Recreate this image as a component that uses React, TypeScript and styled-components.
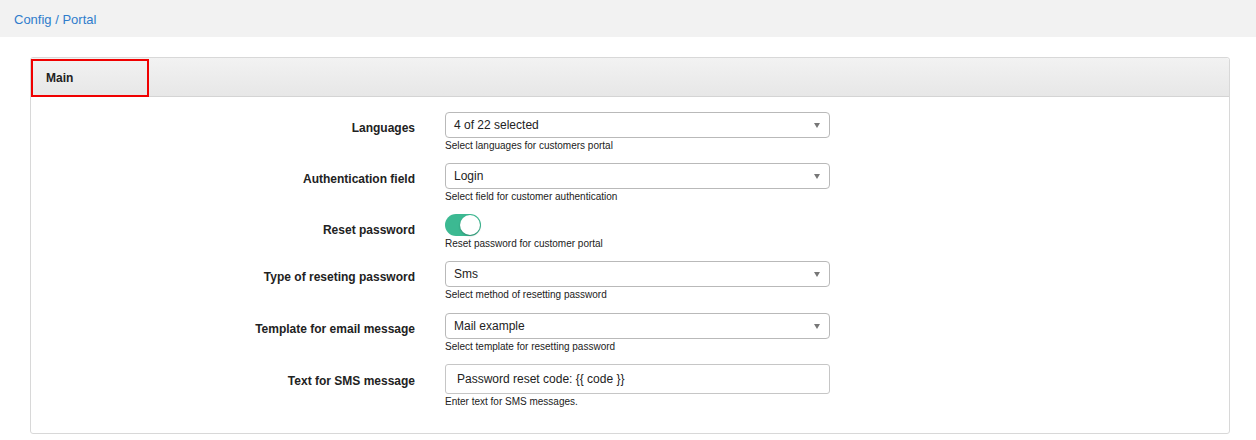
import React from "react";
import styled, { createGlobalStyle } from "styled-components";

const Global = createGlobalStyle`
  html, body { margin: 0; padding: 0; background: #fff; }
  body { font-family: "Liberation Sans", Arial, Helvetica, sans-serif; color: #333; }
`;

const TopBar = styled.div`
  height: 37px;
  background: #f2f2f2;
  display: flex;
  align-items: center;
  padding-left: 14px;
  box-sizing: border-box;
`;

const Crumb = styled.span`
  font-size: 13px;
  color: #2f7ccc;
  padding-top: 1px;
`;

const Page = styled.div`
  padding: 20px 26px 0 30px;
`;

const Panel = styled.div`
  width: 1200px;
  box-sizing: border-box;
  border: 1px solid #d8d8d8;
  border-radius: 3px;
  background: #fff;
  padding-bottom: 14px;
`;

const PanelHeader = styled.div`
  height: 38px;
  background: linear-gradient(#f2f2f2, #e7e7e7);
  border-bottom: 1px solid #d4d4d4;
  border-radius: 3px 3px 0 0;
  display: flex;
  align-items: stretch;
`;

const HeaderTitle = styled.div`
  width: 118px;
  box-sizing: border-box;
  border: 2px solid #f00000;
  margin: 1px 0 -1px 0;
  padding-left: 13px;
  display: flex;
  align-items: center;
  font-size: 12px;
  font-weight: bold;
  color: #222;
`;

const Body = styled.div`
  padding-top: 15px;
`;

const Row = styled.div<{ $gap?: number }>`
  display: grid;
  grid-template-columns: 384px 385px;
  column-gap: 30px;
  margin-bottom: ${(p) => p.$gap ?? 11}px;
`;

const Label = styled.div<{ $tall?: boolean }>`
  text-align: right;
  font-size: 12px;
  font-weight: bold;
  color: #222;
  line-height: 14px;
  padding-top: ${(p) => (p.$tall ? 10 : 9)}px;
`;

const Field = styled.div`
  display: flex;
  flex-direction: column;
  align-items: flex-start;
`;

const Select = styled.div`
  width: 385px;
  height: 26px;
  box-sizing: border-box;
  border: 1px solid #b9b9b9;
  border-radius: 4px;
  background: #fff;
  display: flex;
  align-items: center;
  justify-content: space-between;
  padding: 0 9px 0 8px;
  font-size: 12px;
  color: #222;
`;

const Caret = styled.span`
  width: 0;
  height: 0;
  border-left: 3.5px solid transparent;
  border-right: 3.5px solid transparent;
  border-top: 5px solid #777;
`;

const TextInput = styled.div`
  width: 385px;
  height: 30px;
  box-sizing: border-box;
  border: 1px solid #c6c6c6;
  border-radius: 3px;
  display: flex;
  align-items: center;
  padding-left: 11px;
  font-size: 12px;
  color: #222;
`;

const Toggle = styled.div<{ $on: boolean }>`
  width: 36px;
  height: 22px;
  border-radius: 11px;
  background: ${(p) => (p.$on ? "#3cb992" : "#ddd")};
  position: relative;
  &::after {
    content: "";
    position: absolute;
    top: 1px;
    left: ${(p) => (p.$on ? "15px" : "1px")};
    width: 20px;
    height: 20px;
    border-radius: 50%;
    background: #fff;
    box-shadow: 0 1px 2px rgba(0,0,0,0.25);
  }
`;

const Help = styled.div`
  font-size: 10px;
  line-height: 12px;
  color: #222;
  margin-top: 2px;
`;

type Item =
  | { label: string; kind: "select"; value: string; help: string }
  | { label: string; kind: "toggle"; on: boolean; help: string }
  | { label: string; kind: "text"; value: string; help: string };

const items: Item[] = [
  { label: "Languages", kind: "select", value: "4 of 22 selected", help: "Select languages for customers portal" },
  { label: "Authentication field", kind: "select", value: "Login", help: "Select field for customer authentication" },
  { label: "Reset password", kind: "toggle", on: true, help: "Reset password for customer portal" },
  { label: "Type of reseting password", kind: "select", value: "Sms", help: "Select method of resetting password" },
  { label: "Template for email message", kind: "select", value: "Mail example", help: "Select template for resetting password" },
  { label: "Text for SMS message", kind: "text", value: "Password reset code: {{ code }}", help: "Enter text for SMS messages." },
];

export default function App() {
  return (
    <>
      <Global />
      <TopBar>
        <Crumb>Config / Portal</Crumb>
      </TopBar>
      <Page>
        <Panel>
          <PanelHeader>
            <HeaderTitle>Main</HeaderTitle>
          </PanelHeader>
          <Body>
            {items.map((it, i) => (
              <Row key={it.label} $gap={i === 3 ? 12 : 11}>
                <Label $tall={it.kind === "text"}>{it.label}</Label>
                <Field>
                  {it.kind === "select" && (
                    <Select>
                      <span>{it.value}</span>
                      <Caret />
                    </Select>
                  )}
                  {it.kind === "toggle" && <Toggle $on={it.on} />}
                  {it.kind === "text" && <TextInput>{it.value}</TextInput>}
                  <Help>{it.help}</Help>
                </Field>
              </Row>
            ))}
          </Body>
        </Panel>
      </Page>
    </>
  );
}
